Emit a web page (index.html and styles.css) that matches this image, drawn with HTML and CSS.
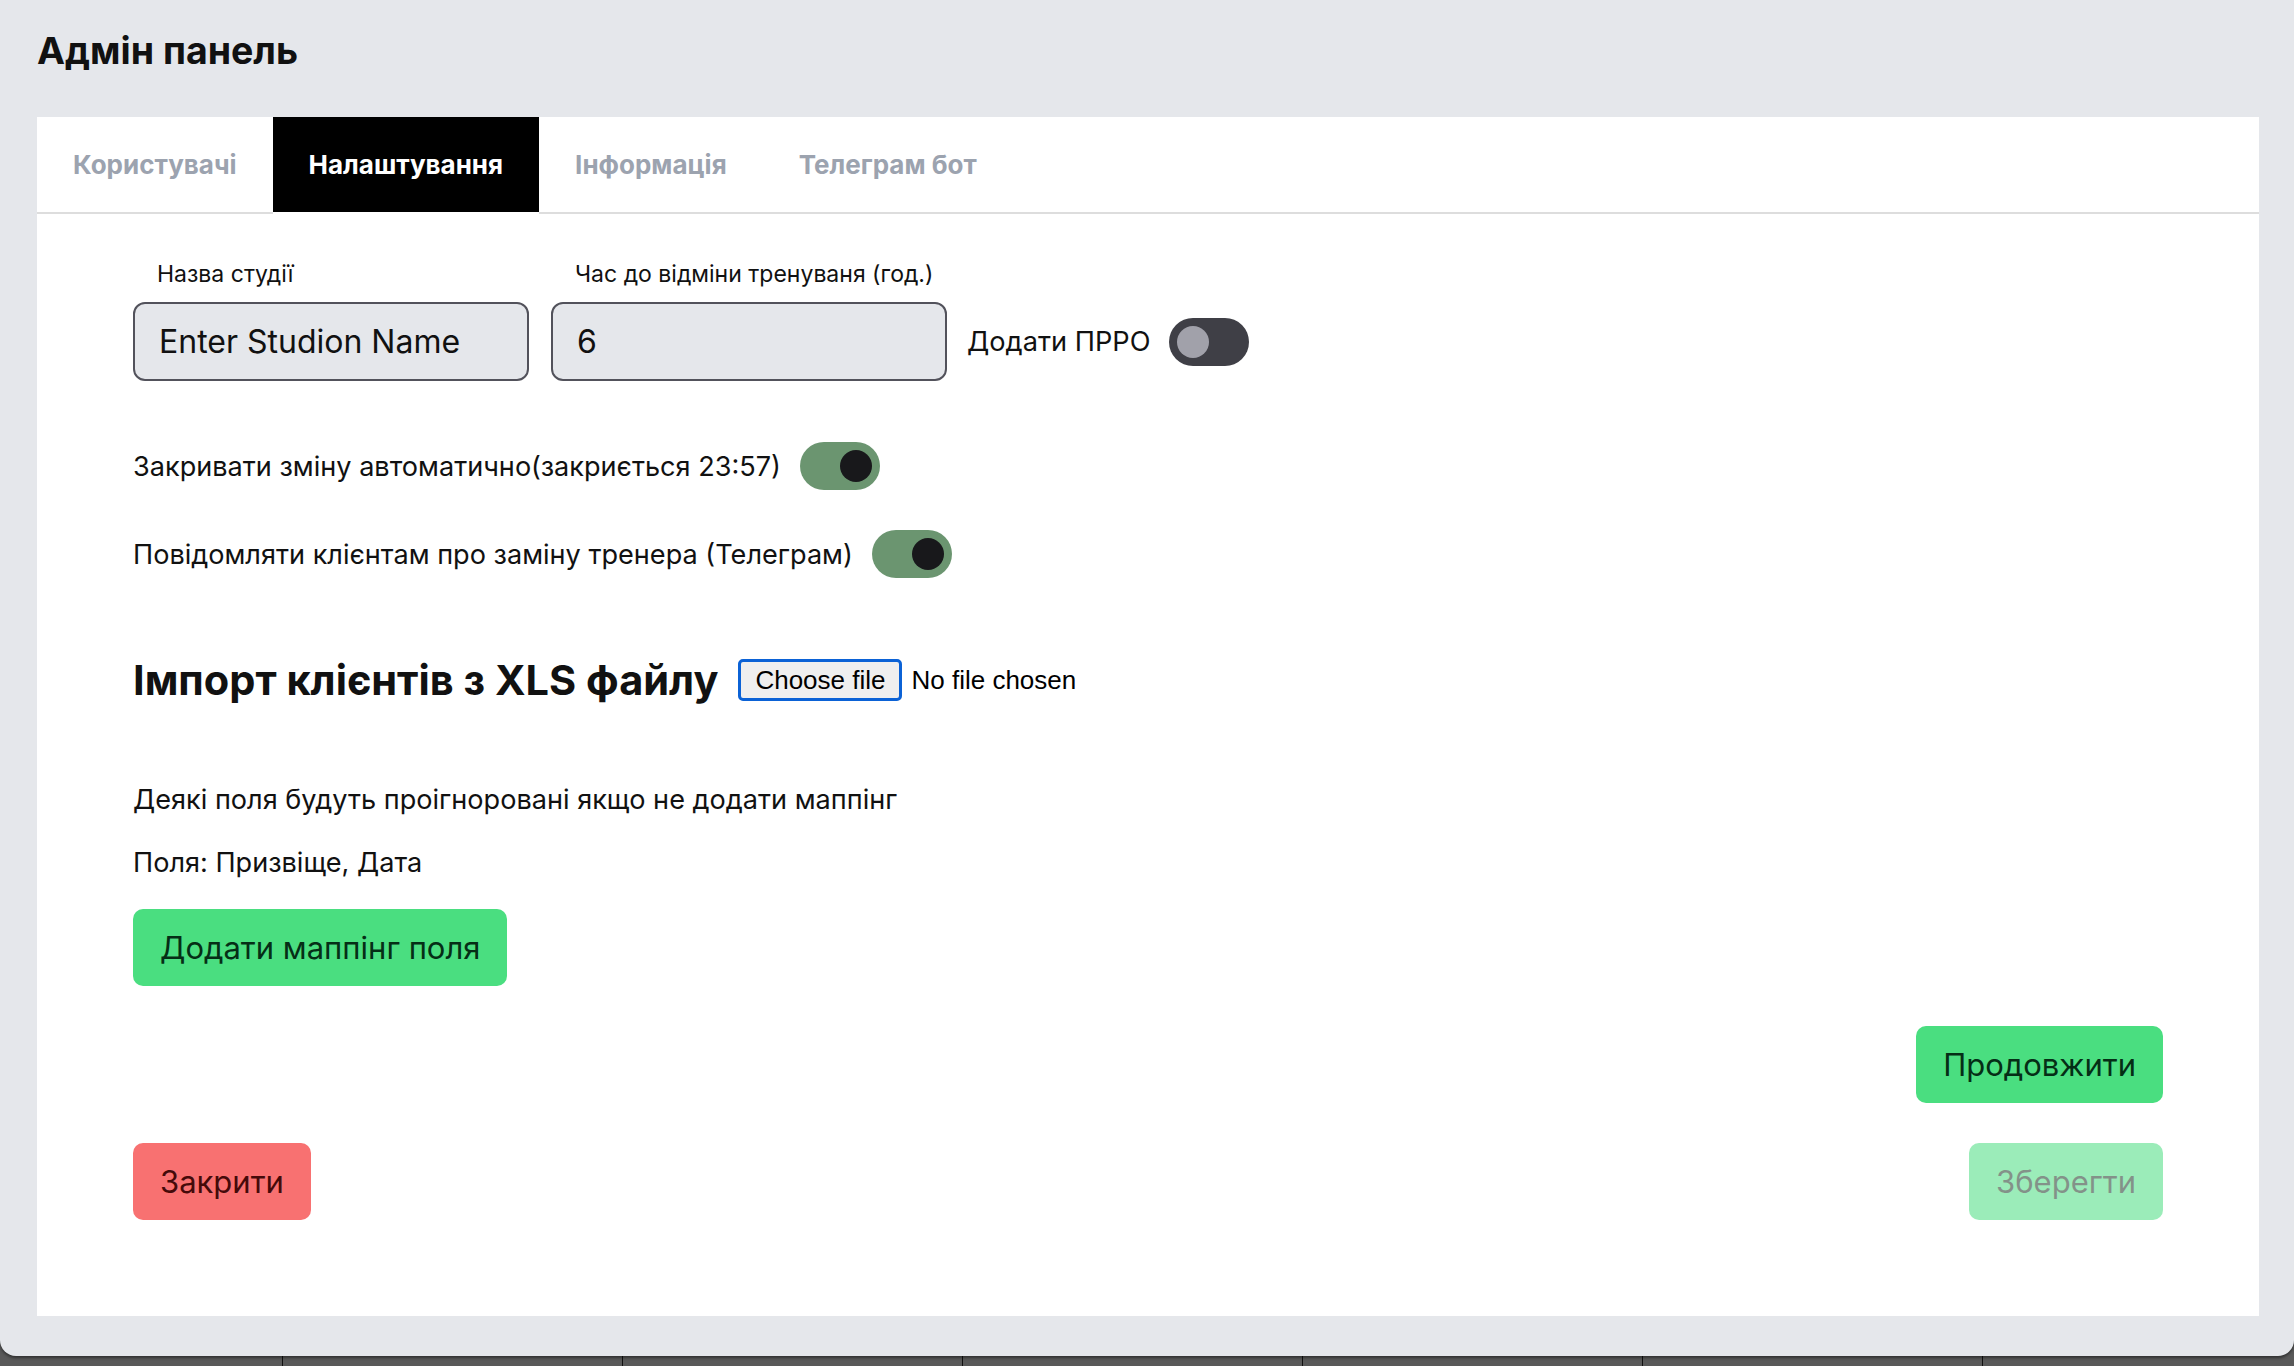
FILE: index.html
```html
<!DOCTYPE html>
<html lang="uk">
<head>
<meta charset="utf-8">
<title>Адмін панель</title>
<link rel="stylesheet" href="styles.css">
</head>
<body>
<div class="modal">
  <h1 class="title">Адмін панель</h1>
  <div class="panel">
    <nav class="tabs">
      <div class="tab">Користувачі</div>
      <div class="tab active">Налаштування</div>
      <div class="tab">Інформація</div>
      <div class="tab">Телеграм бот</div>
    </nav>
    <div class="content">
      <div class="fields">
        <label class="field">
          <span class="field-label">Назва студії</span>
          <input class="text-input" type="text" value="Enter Studion Name">
        </label>
        <label class="field">
          <span class="field-label">Час до відміни тренуваня (год.)</span>
          <input class="text-input" type="text" value="6">
        </label>
        <div class="inline-toggle">
          <span>Додати ПРРО</span>
          <span class="toggle off"><span class="knob"></span></span>
        </div>
      </div>
      <div class="toggle-row first">
        <span>Закривати зміну автоматично(закриється 23:57)</span>
        <span class="toggle on"><span class="knob"></span></span>
      </div>
      <div class="toggle-row">
        <span>Повідомляти клієнтам про заміну тренера (Телеграм)</span>
        <span class="toggle on"><span class="knob"></span></span>
      </div>
      <div class="import-row">
        <h2 class="import-title">Імпорт клієнтів з XLS файлу</h2>
        <div class="file-control">
          <span class="file-btn">Choose file</span>
          <span class="file-name">No file chosen</span>
        </div>
      </div>
      <p class="note">Деякі поля будуть проігноровані якщо не додати маппінг</p>
      <p class="note second">Поля: Призвіще, Дата</p>
      <div class="mapping-row">
        <button class="btn btn-green">Додати маппінг поля</button>
      </div>
      <div class="continue-row">
        <button class="btn btn-green">Продовжити</button>
      </div>
      <div class="bottom-row">
        <button class="btn btn-red">Закрити</button>
        <button class="btn btn-green disabled">Зберегти</button>
      </div>
    </div>
  </div>
</div>
</body>
</html>
```
FILE: styles.css
```css
html, body {
  margin: 0;
  padding: 0;
}

body {
  height: 1366px;
  overflow: hidden;
  background-color: #595959;
  background-image: linear-gradient(90deg, transparent 0, transparent 339px, #111 339px, #111 340px);
  background-size: 340px 100%;
  background-repeat: repeat-x;
  background-position: 283px 0;
  font-family: Inter, "Noto Sans", sans-serif;
  color: #111;
}

.modal {
  height: 1356px;
  box-sizing: border-box;
  background: #e5e7eb;
  border-radius: 0 0 16px 16px;
  padding: 29px 35px 0 37px;
  box-shadow: 0 2px 3px rgba(0, 0, 0, 0.45);
}

.title {
  margin: 0 0 45px;
  font-size: 37.5px;
  line-height: 43px;
  font-weight: 700;
  color: #111;
}

.panel {
  background: #fff;
  display: flex;
  flex-direction: column;
}

.tabs {
  display: flex;
  height: 95px;
  border-bottom: 2px solid #dddddd;
}

.tab {
  display: flex;
  align-items: center;
  padding: 0 36px;
  font-size: 26px;
  font-weight: 700;
  color: #9ca3af;
}

.tab.active {
  background: #000;
  color: #fff;
  margin-bottom: -2px;
  border-bottom: 2px solid #fff;
}

.content {
  display: flex;
  flex-direction: column;
  padding: 46px 96px 96px 96px;
}

.fields {
  display: flex;
  align-items: flex-end;
  gap: 22px;
}

.field {
  display: flex;
  flex-direction: column;
}

.field-label {
  font-size: 23px;
  line-height: 28px;
  padding-left: 24px;
  margin-bottom: 14px;
}

.text-input {
  width: 396px;
  height: 79px;
  box-sizing: border-box;
  border: 2px solid #52525b;
  border-radius: 12px;
  background: #e5e7eb;
  padding: 0 24px;
  font-family: Inter, "Noto Sans", sans-serif;
  font-size: 32px;
  color: #111;
  outline: none;
}

.inline-toggle {
  height: 79px;
  display: flex;
  align-items: center;
  gap: 19px;
  margin-left: -2px;
  font-size: 27.2px;
}

.toggle {
  width: 80px;
  height: 48px;
  box-sizing: border-box;
  border-radius: 24px;
  padding: 0 8px;
  display: flex;
  align-items: center;
}

.toggle .knob {
  width: 32px;
  height: 32px;
  border-radius: 50%;
}

.toggle.off {
  background: #3f3f46;
  justify-content: flex-start;
}

.toggle.off .knob {
  background: #a1a1aa;
}

.toggle.on {
  background: #6b9570;
  justify-content: flex-end;
}

.toggle.on .knob {
  background: #18181b;
}

.toggle-row {
  display: flex;
  align-items: center;
  gap: 19px;
  height: 48px;
  margin-top: 40px;
  font-size: 27.1px;
}

.toggle-row.first {
  margin-top: 61px;
}

.import-row {
  display: flex;
  align-items: center;
  gap: 20px;
  margin-top: 78px;
}

.import-title {
  margin: 0;
  font-size: 41.5px;
  line-height: 48px;
  font-weight: 700;
}

.file-control {
  display: flex;
  align-items: center;
  gap: 9px;
  font-family: "Liberation Sans", Arial, sans-serif;
  font-size: 26px;
  color: #000;
}

.file-btn {
  height: 42px;
  box-sizing: border-box;
  display: flex;
  align-items: center;
  padding: 0 14px;
  border: 3px solid #0b62d6;
  border-radius: 5px;
  background: #efefef;
}

.note {
  margin: 78px 0 0;
  font-size: 27.1px;
  line-height: 36px;
}

.note.second {
  margin-top: 27px;
}

.mapping-row {
  margin-top: 28px;
  display: flex;
}

.continue-row {
  margin-top: 40px;
  display: flex;
  justify-content: flex-end;
}

.bottom-row {
  margin-top: 40px;
  display: flex;
  justify-content: space-between;
}

.btn {
  height: 77px;
  padding: 0 27px;
  border: none;
  border-radius: 10px;
  font-family: Inter, "Noto Sans", sans-serif;
  font-size: 31px;
  display: inline-flex;
  align-items: center;
  cursor: pointer;
}

.btn-green {
  background: #4ade80;
  color: #052e16;
}

.btn-red {
  background: #f87171;
  color: #450a0a;
}

.btn.disabled {
  opacity: 0.55;
  color: #1f3a2a;
}
```
